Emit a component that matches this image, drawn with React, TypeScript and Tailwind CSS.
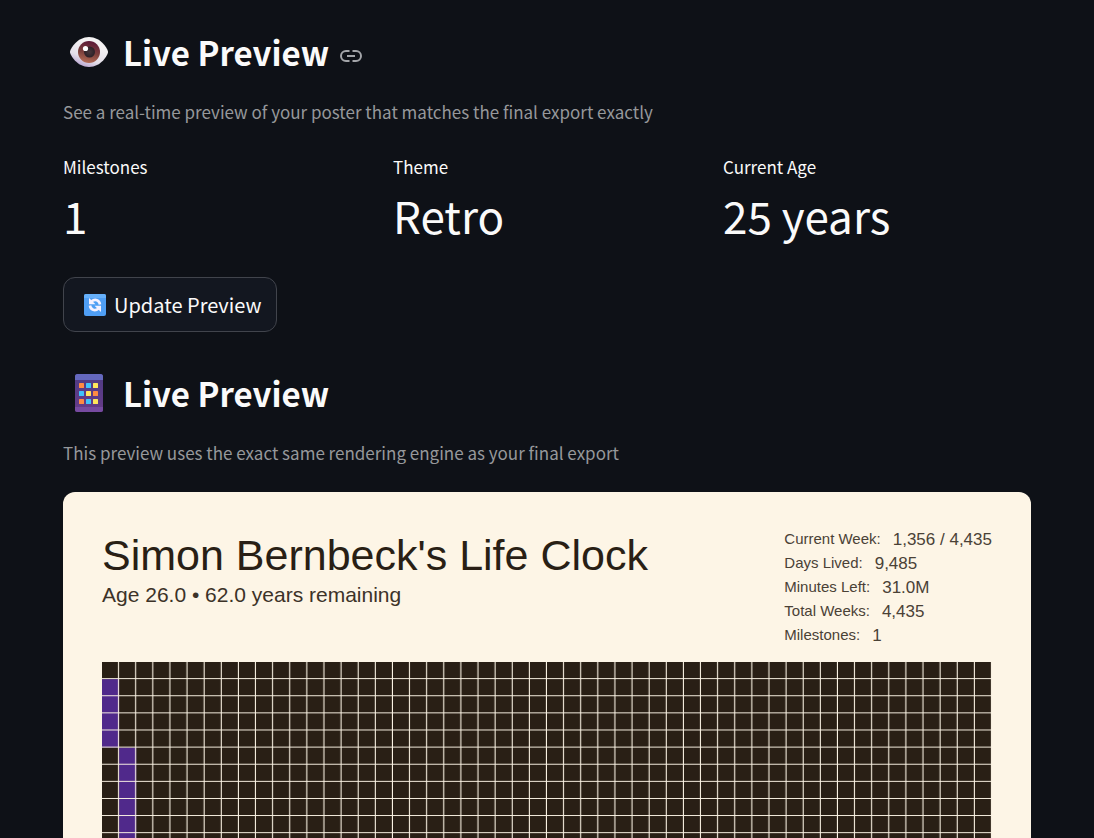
import React from 'react';

const metrics = [
  { label: 'Milestones', value: '1' },
  { label: 'Theme', value: 'Retro' },
  { label: 'Current Age', value: '25 years' },
];

const stats = [
  { label: 'Current Week:', value: '1,356 / 4,435' },
  { label: 'Days Lived:', value: '9,485' },
  { label: 'Minutes Left:', value: '31.0M' },
  { label: 'Total Weeks:', value: '4,435' },
  { label: 'Milestones:', value: '1' },
];

const COLUMNS = 52;
const ROWS = 86;
const CELL = 16;

// Runs of highlighted weeks, in grid units
const highlights = [
  { column: 0, row: 1, length: 4 },
  { column: 1, row: 5, length: 8 },
];

const EyeIcon = () => (
  <svg viewBox="0 0 40 32" className="h-8 w-10 shrink-0" aria-hidden="true">
    <defs>
      <linearGradient id="eye-white" x1="0.1" y1="1" x2="0.5" y2="0.2">
        <stop offset="0" stopColor="#a88fc8" />
        <stop offset="0.45" stopColor="#e4dfe9" />
        <stop offset="1" stopColor="#f4f2f3" />
      </linearGradient>
      <linearGradient id="eye-iris" x1="0.6" y1="0" x2="0.4" y2="1">
        <stop offset="0" stopColor="#5c1838" />
        <stop offset="0.55" stopColor="#7d403c" />
        <stop offset="1" stopColor="#b56d57" />
      </linearGradient>
      <radialGradient id="eye-pupil">
        <stop offset="0" stopColor="#47363b" />
        <stop offset="1" stopColor="#2c2027" />
      </radialGradient>
    </defs>
    <path d="M1 16C1 13 8 1 20 1s19 12 19 15-7 15-19 15S1 19 1 16Z" fill="url(#eye-white)" />
    <circle cx="20" cy="16" r="11" fill="url(#eye-iris)" />
    <circle cx="20.500" cy="16" r="5.500" fill="url(#eye-pupil)" />
    <circle cx="16.500" cy="12.500" r="2.600" fill="#fff" />
  </svg>
);

const PosterIcon = () => {
  const dots = ['#ff8b42', '#3fc3fb', '#ffe65a', '#3fc3fb', '#ffe65a', '#ff8b42', '#ff8b42', '#3fc3fb', '#ffe65a'];
  return (
    <svg viewBox="0 0 40 40" className="size-10 shrink-0" aria-hidden="true">
      <defs>
        <linearGradient id="poster-body" x1="0" y1="0" x2="0" y2="1">
          <stop offset="0" stopColor="#4d3b83" />
          <stop offset="1" stopColor="#673b88" />
        </linearGradient>
      </defs>
      <rect x="6" y="1" width="28" height="38" rx="2.500" fill="url(#poster-body)" />
      <path d="M6 7V3.500A2.500 2.500 0 0 1 8.500 1h23A2.500 2.500 0 0 1 34 3.500V7Z" fill="#6468bd" />
      <path d="M6 34h28v2.500a2.500 2.500 0 0 1-2.500 2.500h-23A2.500 2.500 0 0 1 6 36.500Z" fill="#764aa0" />
      {dots.map((color, i) => (
        <rect key={i} x={10 + (i % 3) * 7} y={10 + Math.floor(i / 3) * 8} width="5" height="5" rx="0.500" fill={color} />
      ))}
    </svg>
  );
};

const RefreshIcon = () => (
  <svg viewBox="0 0 22 22" className="size-[22px] shrink-0" aria-hidden="true">
    <rect width="22" height="22" rx="2" fill="#4f9ef4" />
    <path d="M2 0h18a2 2 0 0 1 2 2v2H0V2a2 2 0 0 1 2-2Z" fill="#66b0fb" />
    <g fill="none" stroke="#f6f1ff" strokeWidth="2.600">
      <path d="M7.500 7.500c3.500-3 8-1.500 8.500 3" />
      <path d="M14.500 14.500c-3.500 3-8 1.500-8.500-3" />
    </g>
    <path d="M5 4v6.200h6.500Z M17 18v-6.200h-6.500Z" fill="#f6f1ff" />
  </svg>
);

const LinkIcon = () => (
  <svg viewBox="0 0 24 14" className="h-[14px] w-6" fill="none" stroke="#a3a5a9" strokeWidth="2" aria-hidden="true">
    <path d="M10.500 2H7a5 5 0 0 0 0 10h3.500M13.500 2H17a5 5 0 0 1 0 10h-3.500M8 7h8" />
  </svg>
);

const SectionHeading: React.FC<{ icon: React.ReactNode; children?: React.ReactNode }> = ({ icon, children }) => (
  <div className="flex h-12 items-center pl-[6px]">
    {icon}
    <h3 className="ml-[14px] text-[33px] leading-12 font-semibold">Live Preview</h3>
    {children}
  </div>
);

const Caption: React.FC<{ children: React.ReactNode }> = ({ children }) => (
  <p className="mt-5 text-[17px] leading-8 text-[#96989b]">{children}</p>
);

const WeekGrid = () => {
  const width = COLUMNS * CELL;
  const height = ROWS * CELL;
  return (
    <svg viewBox={`0 0 ${width} ${height}`} className="block w-full" role="img" aria-label="Life in weeks">
      <defs>
        <pattern id="week" width={CELL} height={CELL} patternUnits="userSpaceOnUse">
          <path d={`M${CELL - 0.5} 0V${CELL}M0 ${CELL - 0.5}H${CELL}`} stroke="#fdf5e6" />
        </pattern>
      </defs>
      <rect width={width} height={height} fill="#291f15" />
      {highlights.map(({ column, row, length }) => (
        <rect key={column} x={column * CELL} y={row * CELL} width={CELL} height={length * CELL} fill="#50298b" />
      ))}
      <rect width={width} height={height} fill="url(#week)" />
    </svg>
  );
};

const Poster = () => (
  <div className="mt-[23px] rounded-xl bg-[#fdf5e6] px-[39px] pt-9 pb-10 font-['Liberation_Sans',Arial,sans-serif] text-[#291f15]">
    <div className="flex items-start justify-between">
      <div className="pt-[3px]">
        <h2 className="text-[43px] leading-12">Simon Bernbeck's Life Clock</h2>
        <p className="text-[21px] leading-8 text-[#3c3228]">Age 26.0 • 62.0 years remaining</p>
      </div>
      <dl className="flex h-[118px] flex-col text-[#4a4136]">
        {stats.map((stat) => (
          <div key={stat.label} className="flex flex-1 gap-3">
            <dt className="text-[15px] leading-[22px]">{stat.label}</dt>
            <dd className="text-[17px] leading-6">{stat.value}</dd>
          </div>
        ))}
      </dl>
    </div>
    <div className="mt-4">
      <WeekGrid />
    </div>
  </div>
);

export default function App() {
  return (
    <main className="h-screen overflow-y-auto bg-[#0e1117] px-[63px] pt-7 font-['Noto_Sans_CJK_SC',sans-serif] text-[#fafafa] [scrollbar-width:none]">
      <SectionHeading icon={<EyeIcon />}>
        <a href="#live-preview" aria-label="Link to this section" className="mt-2 ml-[10px]">
          <LinkIcon />
        </a>
      </SectionHeading>
      <Caption>See a real-time preview of your poster that matches the final export exactly</Caption>

      <dl className="mt-[23px] grid grid-cols-3 gap-[22px]">
        {metrics.map((metric) => (
          <div key={metric.label}>
            <dt className="text-[17px] leading-8">{metric.label}</dt>
            <dd className="text-[44px] leading-16">{metric.value}</dd>
          </div>
        ))}
      </dl>

      <button
        type="button"
        className="mt-[30px] flex h-[55px] items-center gap-2 rounded-xl border border-[#41444c] bg-[#131720] pr-[14px] pl-5 text-[20px] leading-8"
      >
        <RefreshIcon />
        Update Preview
      </button>

      <div className="mt-[37px]">
        <SectionHeading icon={<PosterIcon />} />
      </div>
      <Caption>This preview uses the exact same rendering engine as your final export</Caption>
      <Poster />
    </main>
  );
}
